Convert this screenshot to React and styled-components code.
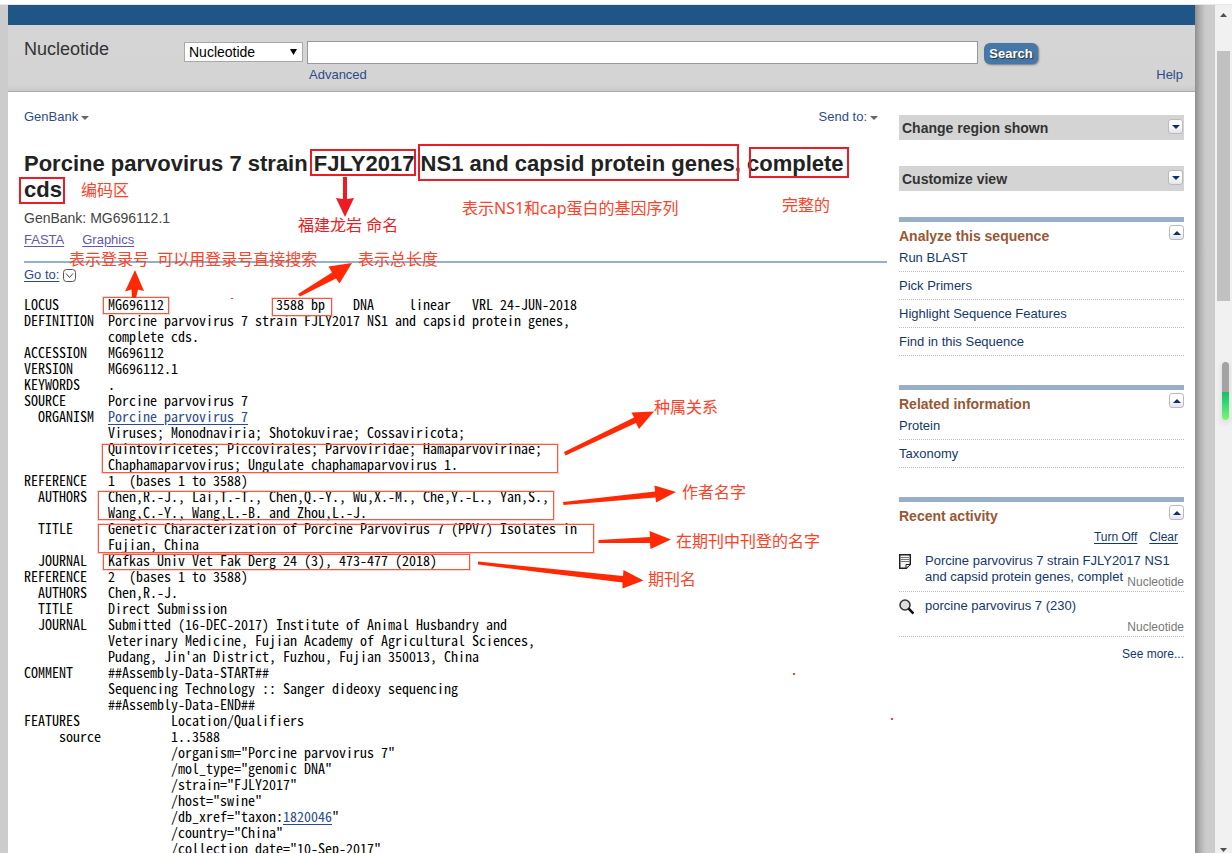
import React from "react";
import styled, { createGlobalStyle } from "styled-components";

const GlobalStyle = createGlobalStyle`
  *, *::before, *::after { box-sizing: border-box; }
  html, body, #root { height: 100%; }
  body {
    margin: 0;
    overflow: hidden;
    background: #fff;
    color: #222;
    font: 13px/16px "Liberation Sans", Arial, sans-serif;
  }
  h1, h2, p, ul, pre { margin: 0; padding: 0; }
  ul { list-style: none; }
`;

const Window = styled.div`
  position: relative;
  display: flex;
  flex-direction: column;
  height: 100%;
  overflow: hidden;
  border-top: 4px solid #fff;
`;

const Frame = styled.div`
  flex: 1;
  min-height: 0;
  display: flex;
  border-top: 1px solid #e8e8e8;
  background: #ccc;
  padding-left: 8px;
`;

const Page = styled.div`
  flex: 1;
  min-width: 0;
  background: #fff;
  overflow: hidden;
`;

const Shade = styled.div`
  width: 20px;
  background: linear-gradient(to right, #8f8f8f, #b0b0b0 5px, #c8c8c8 10px, #ccc 13px);
`;

const ScrollTrack = styled.div`
  position: relative;
  width: 17px;
  display: flex;
  flex-direction: column;
  align-items: center;
  justify-content: space-between;
  background: #f1f1f1;
  padding: 8px 0 1px;
`;

const ScrollThumb = styled.div`
  width: 13px;
  height: 250px;
  margin: 34px 0 auto;
  background: #c1c1c1;
`;

const Meter = styled.div`
  position: absolute;
  right: 3px;
  top: 357px;
  width: 7px;
  height: 58px;
  border-radius: 4px;
  background: linear-gradient(#a3a3a3 30px, #17bf66 30px, #2fd673 40px, #7cf57c);
  box-shadow: 0 2px 4px 2px #e2e2e2;
`;

const BlueBar = styled.div`
  height: 20px;
  background: #205588;
`;

const SearchBar = styled.header`
  display: flex;
  align-items: flex-start;
  height: 67px;
  padding: 16px 12px 0 16px;
  background: linear-gradient(#d5d5d5, #d4d4d4 60px, #c9c9c9);
  border-bottom: 1px solid #a9a9a9;
`;

const Database = styled.div`
  width: 160px;
  font-size: 18px;
  line-height: 16px;
  color: #333;
`;

const SelectWrap = styled.div`
  position: relative;
  width: 119px;
  height: 20px;
  margin: 1px 4px 0 0;
  svg { position: absolute; right: 6px; top: 7px; pointer-events: none; }
`;

const Select = styled.select`
  appearance: none;
  width: 100%;
  height: 20px;
  padding: 0 4px;
  border: 1px solid #a9a9a9;
  border-radius: 0;
  background: #fff;
  color: #000;
  font: 14px/16px "Liberation Sans", Arial, sans-serif;
`;

const QueryColumn = styled.div`
  flex: 1;
  display: flex;
  flex-direction: column;
`;

const Query = styled.input`
  width: 100%;
  height: 23px;
  padding: 0 4px;
  border: 1px solid #999;
  background: #fff;
  font: 14px/16px "Liberation Sans", Arial, sans-serif;
`;

const Link = styled.a`
  color: ${(p) => p.$tone || "#2f4a8b"};
  text-decoration: ${(p) => (p.$underlined ? "underline" : "none")};
  text-underline-offset: 2px;
`;

const UnderQuery = styled.div`
  padding: 3px 2px 0;
`;

const SearchColumn = styled.div`
  width: 205px;
  display: flex;
  flex-direction: column;
  padding: 2px 0 0 6px;
`;

const SearchButton = styled.button`
  width: 54px;
  height: 21px;
  padding: 0;
  border: 0;
  border-radius: 6px;
  background: #4577a8;
  box-shadow: 1px 1px 2px #777;
  color: #fff;
  text-shadow: 1px 1px 1px #333;
  font: bold 13px/20px "Liberation Sans", Arial, sans-serif;
`;

const HelpRow = styled.div`
  align-self: flex-end;
  padding-top: 3px;
`;

const Columns = styled.div`
  display: flex;
  gap: 12px;
  padding: 17px 11px 0 16px;
`;

const Main = styled.main`
  flex: 1;
  min-width: 0;
`;

const DisplayBar = styled.div`
  display: flex;
  justify-content: space-between;
  padding-right: 9px;
`;

const MenuButton = styled.button`
  display: flex;
  align-items: center;
  gap: 3px;
  padding: 0;
  border: 0;
  background: none;
  color: #2f4a8b;
  font: 13px/16px "Liberation Sans", Arial, sans-serif;
  svg { margin-top: 2px; }
`;

const Title = styled.h1`
  margin-top: 26px;
  padding-right: 30px;
  color: #222;
  font-size: 22px;
  line-height: 26px;
`;

const Accession = styled.p`
  margin-top: 7px;
  font-size: 14px;
  line-height: 16px;
  color: #444;
`;

const Formats = styled.nav`
  display: flex;
  gap: 18px;
  padding: 6px 0 13px;
  border-bottom: 2px solid #97b0c8;
`;

const GoTo = styled.div`
  display: flex;
  align-items: center;
  gap: 4px;
  padding: 4px 0 13px;
`;

const Record = styled.pre`
  color: #000;
  font: 14px/16px "Noto Sans Mono CJK SC", "Liberation Mono", monospace;
`;

const Sidebar = styled.aside`
  width: 285px;
  padding-top: 6px;
`;

const Collapsed = styled.section`
  display: flex;
  justify-content: space-between;
  height: 25px;
  margin-bottom: 26px;
  padding: 4px 1px 0 3px;
  background: #d4d4d4;
`;

const PanelTitle = styled.h2`
  color: ${(p) => (p.$plain ? "#333" : "#985735")};
  font-size: 14px;
  line-height: ${(p) => (p.$plain ? "18px" : "16px")};
`;

const Panel = styled.section`
  margin-bottom: 29px;
  border-top: 5px solid #97b0c8;
`;

const PanelHead = styled.div`
  display: flex;
  justify-content: space-between;
  height: 22px;
  padding-top: 3px;
  ${PanelTitle} { padding-top: 3px; }
`;

const Toggle = styled.button`
  display: flex;
  align-items: center;
  justify-content: center;
  width: 15px;
  height: 15px;
  padding: 0;
  border: 1px solid #bbb;
  border-radius: 3px;
  background: linear-gradient(#fff 40%, #e4e4ea);
`;

const PanelItem = styled.li`
  padding: 6px 0 5px;
  border-bottom: 1px dotted #bbb;
`;

const HistoryActions = styled.div`
  display: flex;
  justify-content: flex-end;
  gap: 12px;
  padding: 5px 6px 1px 0;
  font-size: 12px;
`;

const HistoryItem = styled.li`
  position: relative;
  display: flex;
  align-items: flex-start;
  gap: 11px;
  min-height: ${(p) => (p.$short ? "45px" : "46px")};
  padding-top: ${(p) => (p.$short ? "6px" : "7px")};
  border-bottom: 1px dotted #bbb;
  svg { flex: none; margin-top: 1px; }
`;

const Source = styled.span`
  position: absolute;
  right: 0;
  bottom: 1px;
  padding-left: 4px;
  background: #fff;
  color: #777;
  font-size: 12px;
  line-height: 16px;
`;

const SeeMore = styled.div`
  padding-top: 9px;
  text-align: right;
  font-size: 12px;
`;

const Notes = styled.div`
  position: absolute;
  inset: -4px 0 0 0;
  pointer-events: none;
  svg { position: absolute; left: 0; top: 0; }
`;

const NoteBox = styled.div`
  position: absolute;
  left: ${(p) => p.$x}px;
  top: ${(p) => p.$y}px;
  width: ${(p) => p.$w}px;
  height: ${(p) => p.$h}px;
  border: ${(p) => (p.$bold ? "2px solid #ed1c24" : "1px solid #f9573f")};
  box-shadow: ${(p) => (p.$bold ? "none" : "0 0 0 1px #ff41283a")};
`;

const NoteText = styled.span`
  position: absolute;
  left: ${(p) => p.$x}px;
  top: ${(p) => p.$y}px;
  color: ${(p) => (p.$deep ? "#ed1c24" : "#ff4128")};
  font: 16px/20px "Noto Sans", "Noto Sans CJK SC", sans-serif;
  white-space: pre;
`;

const boxes = [
  [310, 149, 106, 27, true],
  [418, 144, 321, 37, true],
  [749, 147, 100, 31, true],
  [19, 177, 46, 27, true],
  [103, 297, 66, 17],
  [272, 298, 60, 18],
  [102, 444, 456, 29],
  [98, 491, 456, 29],
  [98, 524, 496, 29],
  [103, 554, 367, 16],
];

const notes = [
  [81, 180, "编码区"],
  [298, 215, "福建龙岩 命名", true],
  [462, 198, "表示NS1和cap蛋白的基因序列"],
  [782, 195, "完整的"],
  [69, 249, "表示登录号  可以用登录号直接搜索"],
  [358, 249, "表示总长度"],
  [654, 397, "种属关系"],
  [682, 482, "作者名字"],
  [676, 531, "在期刊中刊登的名字"],
  [648, 569, "期刊名"],
];

const arrows = [
  "M564 452 L634 417.500 L631.500 412.500 L654 411.500 L639 429 L636 423 L565.500 455.500Z",
  "M563 502 L655 491.500 L654.500 485.500 L676 492 L656 502.500 L655.500 497.500 L563.500 505Z",
  "M598.500 540 L650 537 L649.500 531 L671 539.500 L650.500 549 L650 543 L598.500 543Z",
  "M478 561.500 L623 576 L623.500 570 L643.500 580.500 L622.500 588.500 L622.500 582.500 L478 564.500Z",
  "M298 294 L332 272.500 L328.500 266.500 L352 263 L339.500 283.500 L336 278.500 L300 296.500Z",
  "M135 270 L144 291 L138 289.500 L136 298 L132 298 L131.500 289.500 L125 291.500Z",
];

const Down = ({ color = "#666" }) => (
  <svg width="8" height="4" viewBox="0 0 8 4" aria-hidden="true">
    <path d="M0 0h8L4 4z" fill={color} />
  </svg>
);

const Up = () => (
  <svg width="8" height="4" viewBox="0 0 8 4" aria-hidden="true">
    <path d="M0 4h8L4 0z" fill="#0d2f6e" />
  </svg>
);

const ExpandedPanel = ({ title, children }) => (
  <Panel>
    <PanelHead>
      <PanelTitle>{title}</PanelTitle>
      <Toggle aria-label={`Collapse ${title}`}><Up /></Toggle>
    </PanelHead>
    {children}
  </Panel>
);

const LinkPanel = ({ title, links }) => (
  <ExpandedPanel title={title}>
    <ul>
      {links.map((text) => (
        <PanelItem key={text}><Link href="#" $tone="#14376c">{text}</Link></PanelItem>
      ))}
    </ul>
  </ExpandedPanel>
);

const beforeOrganism = `LOCUS       MG696112                3588 bp    DNA     linear   VRL 24-JUN-2018
DEFINITION  Porcine parvovirus 7 strain FJLY2017 NS1 and capsid protein genes,
            complete cds.
ACCESSION   MG696112
VERSION     MG696112.1
KEYWORDS    .
SOURCE      Porcine parvovirus 7
  ORGANISM  `;

const afterOrganism = `
            Viruses; Monodnaviria; Shotokuvirae; Cossaviricota;
            Quintoviricetes; Piccovirales; Parvoviridae; Hamaparvovirinae;
            Chaphamaparvovirus; Ungulate chaphamaparvovirus 1.
REFERENCE   1  (bases 1 to 3588)
  AUTHORS   Chen,R.-J., Lai,T.-T., Chen,Q.-Y., Wu,X.-M., Che,Y.-L., Yan,S.,
            Wang,C.-Y., Wang,L.-B. and Zhou,L.-J.
  TITLE     Genetic Characterization of Porcine Parvovirus 7 (PPV7) Isolates in
            Fujian, China
  JOURNAL   Kafkas Univ Vet Fak Derg 24 (3), 473-477 (2018)
REFERENCE   2  (bases 1 to 3588)
  AUTHORS   Chen,R.-J.
  TITLE     Direct Submission
  JOURNAL   Submitted (16-DEC-2017) Institute of Animal Husbandry and
            Veterinary Medicine, Fujian Academy of Agricultural Sciences,
            Pudang, Jin'an District, Fuzhou, Fujian 350013, China
COMMENT     ##Assembly-Data-START##
            Sequencing Technology :: Sanger dideoxy sequencing
            ##Assembly-Data-END##
FEATURES             Location/Qualifiers
     source          1..3588
                     /organism="Porcine parvovirus 7"
                     /mol_type="genomic DNA"
                     /strain="FJLY2017"
                     /host="swine"
                     /db_xref="taxon:`;

const afterTaxon = `"
                     /country="China"
                     /collection_date="10-Sep-2017"`;

export default function App() {
  return (
    <>
      <GlobalStyle />
      <Window>
        <Frame>
          <Page>
            <BlueBar />
            <SearchBar>
              <Database>Nucleotide</Database>
              <SelectWrap>
                <Select aria-label="Database"><option>Nucleotide</option></Select>
                <svg width="7" height="6" viewBox="0 0 7 6" aria-hidden="true">
                  <path d="M0 0h7L3.500 6z" fill="#000" />
                </svg>
              </SelectWrap>
              <QueryColumn>
                <Query type="text" aria-label="Search term" />
                <UnderQuery><Link href="#">Advanced</Link></UnderQuery>
              </QueryColumn>
              <SearchColumn>
                <SearchButton>Search</SearchButton>
                <HelpRow><Link href="#">Help</Link></HelpRow>
              </SearchColumn>
            </SearchBar>
            <Columns>
              <Main>
                <DisplayBar>
                  <MenuButton>GenBank<Down /></MenuButton>
                  <MenuButton>Send to:<Down /></MenuButton>
                </DisplayBar>
                <Title>Porcine parvovirus 7 strain FJLY2017 NS1 and capsid protein genes, complete cds</Title>
                <Accession>GenBank: MG696112.1</Accession>
                <Formats>
                  <Link href="#" $underlined $tone="#6458a6">FASTA</Link>
                  <Link href="#" $underlined $tone="#6458a6">Graphics</Link>
                </Formats>
                <GoTo>
                  <Link href="#" $underlined>Go to:</Link>
                  <svg width="13" height="13" viewBox="0 0 13 13" fill="none" aria-hidden="true">
                    <rect x=".5" y=".5" width="12" height="12" rx="3" stroke="#555" />
                    <path d="M3 4.500l3.500 4 3.500-4" stroke="#444" />
                  </svg>
                </GoTo>
                <Record>
                  {beforeOrganism}
                  <Link href="#" $underlined>Porcine parvovirus 7</Link>
                  {afterOrganism}
                  <Link href="#" $underlined>1820046</Link>
                  {afterTaxon}
                </Record>
              </Main>
              <Sidebar>
                {["Change region shown", "Customize view"].map((title) => (
                  <Collapsed key={title}>
                    <PanelTitle $plain>{title}</PanelTitle>
                    <Toggle aria-label={`Expand ${title}`}><Down color="#0d2f6e" /></Toggle>
                  </Collapsed>
                ))}
                <LinkPanel
                  title="Analyze this sequence"
                  links={["Run BLAST", "Pick Primers", "Highlight Sequence Features", "Find in this Sequence"]}
                />
                <LinkPanel title="Related information" links={["Protein", "Taxonomy"]} />
                <ExpandedPanel title="Recent activity">
                  <HistoryActions>
                    <Link href="#" $underlined $tone="#14376c">Turn Off</Link>
                    <Link href="#" $underlined $tone="#14376c">Clear</Link>
                  </HistoryActions>
                  <ul>
                    <HistoryItem>
                      <svg width="15" height="16" viewBox="0 0 15 16" fill="none" aria-hidden="true">
                        <path d="M.75.75h10.500v9.500l-4 4H.75z" fill="#f4f4f4" stroke="#222" strokeWidth="1.500" />
                        <path d="M2 3.500h8M2 5.500h8M2 7.500h8" stroke="#777" />
                        <path d="M7 14.500V10.500h4.500z" fill="#fff" stroke="#222" />
                      </svg>
                      <Link href="#" $tone="#14376c">
                        Porcine parvovirus 7 strain FJLY2017 NS1<br />and capsid protein genes, complet
                      </Link>
                      <Source>Nucleotide</Source>
                    </HistoryItem>
                    <HistoryItem $short>
                      <svg width="15" height="16" viewBox="0 0 15 16" fill="none" aria-hidden="true">
                        <circle cx="6" cy="6" r="5" fill="#ddd" stroke="#333" strokeWidth="1.500" />
                        <path d="M9.500 9.500l5 5" stroke="#111" strokeWidth="2.500" />
                      </svg>
                      <Link href="#" $tone="#14376c">porcine parvovirus 7 (230)</Link>
                      <Source>Nucleotide</Source>
                    </HistoryItem>
                  </ul>
                  <SeeMore><Link href="#" $tone="#14376c">See more...</Link></SeeMore>
                </ExpandedPanel>
              </Sidebar>
            </Columns>
          </Page>
          <Shade />
          <ScrollTrack aria-hidden="true">
            <svg width="7" height="4" viewBox="0 0 7 4"><path d="M0 4h7L3.500 0z" fill="#505050" /></svg>
            <ScrollThumb />
            <svg width="7" height="4" viewBox="0 0 7 4"><path d="M0 0h7L3.500 4z" fill="#505050" /></svg>
            <Meter />
          </ScrollTrack>
        </Frame>
        <Notes>
          {boxes.map(([x, y, w, h, bold]) => (
            <NoteBox key={`${x}-${y}`} $x={x} $y={y} $w={w} $h={h} $bold={bold} />
          ))}
          <svg width="900" height="730" viewBox="0 0 900 730" aria-hidden="true">
            {arrows.map((d) => <path key={d} d={d} fill="#ff2a05" />)}
            <path d="M343 177h4v22l7-1-9 19-9-19 7 1z" fill="#ed1c24" />
            <path d="M231 298h2v1h-2zM793 673h2v2h-2zM891 718h2v2h-2z" fill="#f04040" />
          </svg>
          {notes.map(([x, y, text, deep]) => (
            <NoteText key={text} $x={x} $y={y} $deep={deep}>{text}</NoteText>
          ))}
        </Notes>
      </Window>
    </>
  );
}
